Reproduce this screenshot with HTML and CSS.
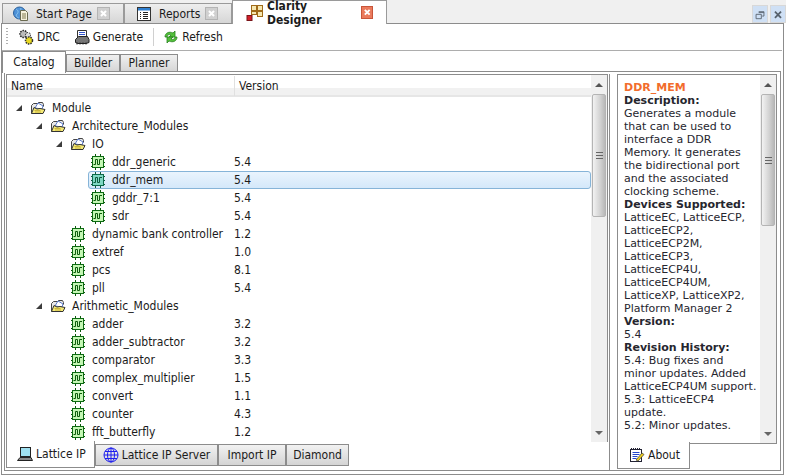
FILE: index.html
```html
<!DOCTYPE html>
<html lang="en">
<head>
    <meta charset="UTF-8">
    <title>Clarity Designer</title>
    <link rel="stylesheet" href="styles.css">
</head>
<body>
    <svg class="defs" width="0" height="0">
        <symbol id="chip" viewBox="0 0 16 16">
            <path d="M1 4.5h2M1 8.5h2M1 12.5h2M13 4.5h2M13 8.5h2M13 12.5h2M5.500 0v2M10.500 0v2M5.500 14v2M10.500 14v2" stroke="#0c5a0c" fill="none"/>
            <rect x="2.500" y="2.500" width="11" height="11" fill="#c4f7b4" stroke="#0c6a12"/>
            <path d="M3.500 10.500h2v-5h2v5h2v-5h2.500" stroke="#0c5a0c" fill="none"/>
        </symbol>
        <symbol id="chip-sel" viewBox="0 0 16 16">
            <path d="M1 4.500h2M1 8.500h2M1 12.500h2M13 4.500h2M13 8.500h2M13 12.500h2M5.500 0v2M10.500 0v2M5.500 14v2M10.500 14v2" stroke="#0c5a3c" fill="none"/>
            <rect x="2.500" y="2.500" width="11" height="11" fill="#7fd8c4" stroke="#0c6a4a"/>
            <path d="M3.500 10.500h2v-5h2v5h2v-5h2.500" stroke="#0c5a3c" fill="none"/>
        </symbol>
        <symbol id="folder" viewBox="0 0 16 16">
            <path d="M1.500 13.500v-8l2-2h4l1-1h4l1 2v2" fill="#e8e8e8" stroke="#444"/>
            <path d="M5 8l3-5 5 3-1 3z" fill="#fff" stroke="#3a5fc0" stroke-width=".8"/>
            <path d="M1.500 13.500l2.500-6 3 1.500 3-.5 5 1-2 4z" fill="#f5ea78" stroke="#333"/>
            <path d="M5 12h6M4.500 10.500h6" stroke="#c9b53a"/>
        </symbol>
        <symbol id="close" viewBox="0 0 13 13">
            <path d="M3.500 3.500l6 6M9.500 3.500l-6 6" stroke="#fff" stroke-width="2.400" fill="none"/>
        </symbol>
    </svg>

    <div class="topbar">
        <div class="doc-tab">
            <svg class="ico16" viewBox="0 0 16 16">
                <circle cx="6.500" cy="7" r="6" fill="#4f92d8" stroke="#2a5f9a"/>
                <path d="M3 3c2 1 3 3 1 5s1 4 2 4M8 2c-1 2 1 3 3 3" stroke="#8ec8f0" fill="none"/>
                <path d="M7.500 4.500h5l2 2v8h-7z" fill="#f6f1dc" stroke="#6a6a50"/>
                <path d="M9 8h4M9 10h4M9 12h4" stroke="#807a50"/>
            </svg>
            <span class="doc-label">Start Page</span>
            <span class="doc-x"><svg viewBox="0 0 13 13"><use href="#close"/></svg></span>
        </div>
        <div class="doc-tab doc-tab-reports">
            <svg class="ico16" viewBox="0 0 16 16">
                <rect x="1.500" y="1.500" width="13" height="13" fill="#fff" stroke="#333"/>
                <rect x="2" y="2" width="12" height="2.500" fill="#2f7fd0"/>
                <path d="M4 6.500h1M7 6.500h5M4 8.500h1M7 8.500h5M4 10.500h1M7 10.500h5M4 12.500h1M7 12.500h5" stroke="#222"/>
            </svg>
            <span class="doc-label">Reports</span>
            <span class="doc-x"><svg viewBox="0 0 13 13"><use href="#close"/></svg></span>
        </div>
        <div class="doc-tab doc-tab-active">
            <svg class="ico18" viewBox="0 0 18 18">
                <rect x="5.500" y="1.500" width="5" height="5" fill="#f6e7b0" stroke="#a06a18"/>
                <rect x="11.500" y="1.500" width="5" height="5" fill="#f6e7b0" stroke="#a06a18"/>
                <rect x="5.500" y="7.500" width="5" height="3" fill="#f6e7b0" stroke="#a06a18"/>
                <rect x="11.500" y="7.500" width="5" height="5" fill="#f6e7b0" stroke="#a06a18"/>
                <rect x="1" y="11.500" width="5" height="5" fill="#d21f2a" stroke="#7a1418"/>
            </svg>
            <span class="doc-label">Clarity Designer</span>
            <span class="doc-x doc-x-red"><svg viewBox="0 0 13 13"><use href="#close"/></svg></span>
        </div>
        <div class="win-btns">
            <span class="win-btn">
                <svg viewBox="0 0 16 18"><path d="M6.500 6.500h6v5h-2M3.500 9.500h6v5h-6zM6.500 7.500h6" fill="none" stroke="#56606c"/></svg>
            </span>
            <span class="win-btn">
                <svg viewBox="0 0 16 18"><path d="M4.500 6.500l7 7M11.500 6.500l-7 7" fill="none" stroke="#56606c" stroke-width="2"/></svg>
            </span>
        </div>
    </div>

    <div class="main">
        <div class="toolbar">
            <span class="grip"></span>
            <button class="tool tool-drc">
                <svg class="ico16" viewBox="0 0 16 16">
                    <circle cx="5.500" cy="5" r="3.500" fill="#bbb" stroke="#222" stroke-width="1.500" stroke-dasharray="1.500 1"/>
                    <circle cx="10" cy="6" r="2.500" fill="#ddd" stroke="#222" stroke-dasharray="1.500 1"/>
                    <circle cx="11" cy="11.500" r="3.500" fill="#e8d820" stroke="#333" stroke-width="1.500" stroke-dasharray="1.500 1"/>
                </svg>
                DRC
            </button>
            <button class="tool tool-gen">
                <svg class="ico16" viewBox="0 0 16 16">
                    <path d="M3.500 1.500h9v8h-9z" fill="#fff" stroke="#333"/>
                    <path d="M5 3.500h6M5 5.500h6M5 7.500h6" stroke="#3355cc"/>
                    <path d="M1.500 10.500l3-3h9l1.500 3v3l-3 1h-8l-2.500-1z" fill="#777" stroke="#222"/>
                    <path d="M3 15.500v-2M6 15.500v-2M9 15.500v-2M12 15.500v-2" stroke="#222"/>
                </svg>
                Generate
            </button>
            <span class="tool-sep"></span>
            <button class="tool tool-ref">
                <svg class="ico16" viewBox="0 0 16 16">
                    <path d="M2 8c0-4 4-6 8-4l2-2v6h-6l2-2c-2-1-4 0-4 2z" fill="#52c03a" stroke="#2a8020" stroke-width=".8"/>
                    <path d="M14 8c0 4-4 6-8 4l-2 2v-6h6l-2 2c2 1 4 0 4-2z" fill="#52c03a" stroke="#2a8020" stroke-width=".8"/>
                </svg>
                Refresh
            </button>
        </div>

        <div class="subtabs">
            <span class="subtab subtab-active">Catalog</span>
            <span class="subtab subtab-builder">Builder</span>
            <span class="subtab subtab-planner">Planner</span>
        </div>

        <div class="panel">
            <div class="left-col">
                <div class="pane tree-pane">
                    <div class="tree">
                        <div class="tree-head">
                            <span class="col-name">Name</span>
                            <span class="col-version">Version</span>
                        </div>
                        <div class="row d0"><i class="arrow"></i><svg class="ico16"><use href="#folder"/></svg><span class="name">Module</span></div>
                        <div class="row d1"><i class="arrow"></i><svg class="ico16"><use href="#folder"/></svg><span class="name">Architecture_Modules</span></div>
                        <div class="row d2"><i class="arrow"></i><svg class="ico16"><use href="#folder"/></svg><span class="name">IO</span></div>
                        <div class="row d3"><svg class="ico16"><use href="#chip"/></svg><span class="name">ddr_generic</span><span class="ver">5.4</span></div>
                        <div class="row d3 selected"><svg class="ico16"><use href="#chip-sel"/></svg><span class="name">ddr_mem</span><span class="ver">5.4</span></div>
                        <div class="row d3"><svg class="ico16"><use href="#chip"/></svg><span class="name">gddr_7:1</span><span class="ver">5.4</span></div>
                        <div class="row d3"><svg class="ico16"><use href="#chip"/></svg><span class="name">sdr</span><span class="ver">5.4</span></div>
                        <div class="row d2 leaf"><svg class="ico16"><use href="#chip"/></svg><span class="name">dynamic bank controller</span><span class="ver">1.2</span></div>
                        <div class="row d2 leaf"><svg class="ico16"><use href="#chip"/></svg><span class="name">extref</span><span class="ver">1.0</span></div>
                        <div class="row d2 leaf"><svg class="ico16"><use href="#chip"/></svg><span class="name">pcs</span><span class="ver">8.1</span></div>
                        <div class="row d2 leaf"><svg class="ico16"><use href="#chip"/></svg><span class="name">pll</span><span class="ver">5.4</span></div>
                        <div class="row d1"><i class="arrow"></i><svg class="ico16"><use href="#folder"/></svg><span class="name">Arithmetic_Modules</span></div>
                        <div class="row d2 leaf"><svg class="ico16"><use href="#chip"/></svg><span class="name">adder</span><span class="ver">3.2</span></div>
                        <div class="row d2 leaf"><svg class="ico16"><use href="#chip"/></svg><span class="name">adder_subtractor</span><span class="ver">3.2</span></div>
                        <div class="row d2 leaf"><svg class="ico16"><use href="#chip"/></svg><span class="name">comparator</span><span class="ver">3.3</span></div>
                        <div class="row d2 leaf"><svg class="ico16"><use href="#chip"/></svg><span class="name">complex_multiplier</span><span class="ver">1.5</span></div>
                        <div class="row d2 leaf"><svg class="ico16"><use href="#chip"/></svg><span class="name">convert</span><span class="ver">1.1</span></div>
                        <div class="row d2 leaf"><svg class="ico16"><use href="#chip"/></svg><span class="name">counter</span><span class="ver">4.3</span></div>
                        <div class="row d2 leaf"><svg class="ico16"><use href="#chip"/></svg><span class="name">fft_butterfly</span><span class="ver">1.2</span></div>
                    </div>
                    <div class="scrollbar">
                        <i class="sb-up"></i>
                        <div class="sb-thumb sb-thumb-tree"><span class="sb-grip"></span></div>
                        <i class="sb-down"></i>
                    </div>
                </div>
                <div class="bottom-tabs">
                    <span class="btab btab-active btab-ip">
                        <svg class="ico16" viewBox="0 0 16 16">
                            <rect x="3.500" y="1.500" width="10" height="9" fill="#9fe0f0" stroke="#222"/>
                            <path d="M3 11.500h11l1.500 3h-15z" fill="#888" stroke="#222"/>
                        </svg>
                        Lattice IP
                    </span>
                    <span class="btab btab-server">
                        <svg class="ico16" viewBox="0 0 16 16">
                            <circle cx="8" cy="8" r="7" fill="none" stroke="#1c1cf0"/>
                            <ellipse cx="8" cy="8" rx="3.500" ry="7" fill="none" stroke="#1c1cf0"/>
                            <path d="M8 1v14M1 8h14M2 4.500h12M2 11.500h12" stroke="#1c1cf0"/>
                        </svg>
                        Lattice IP Server
                    </span>
                    <span class="btab btab-import">Import IP</span>
                    <span class="btab btab-diamond">Diamond</span>
                </div>
            </div>

            <div class="right-col">
                <div class="pane about-pane">
                    <div class="about-text">
                        <div class="about-title">DDR_MEM</div>
                        <b>Description:</b><br>
                        Generates a module that can be used to interface a DDR Memory. It generates the bidirectional port and the associated clocking scheme.<br>
                        <b>Devices Supported:</b><br>
                        LatticeEC, LatticeECP, LatticeECP2, LatticeECP2M, LatticeECP3, LatticeECP4U, LatticeECP4UM, LatticeXP, LatticeXP2, Platform Manager 2<br>
                        <b>Version:</b><br>
                        5.4<br>
                        <b>Revision History:</b><br>
                        5.4: Bug fixes and minor updates. Added LatticeECP4UM support.<br>
                        5.3: LatticeECP4 update.<br>
                        5.2: Minor updates.
                    </div>
                    <div class="scrollbar">
                        <i class="sb-up"></i>
                        <div class="sb-thumb sb-thumb-about"><span class="sb-grip"></span></div>
                        <i class="sb-down"></i>
                    </div>
                </div>
                <div class="bottom-tabs">
                    <span class="btab btab-active btab-about">
                        <svg class="ico16" viewBox="0 0 16 16">
                            <rect x="1.500" y="2.500" width="11" height="12" fill="#fff" stroke="#223"/>
                            <path d="M2 1.500h10" stroke="#223" stroke-dasharray="1 1"/>
                            <path d="M3.500 5.500h7M3.500 7.500h7M3.500 9.500h5M3.500 11.500h4" stroke="#2244cc"/>
                            <path d="M7 13l6-7 2 1.500-6 6.500z" fill="#f0d020" stroke="#333" stroke-width=".7"/>
                        </svg>
                        About
                    </span>
                </div>
            </div>
        </div>
    </div>
</body>
</html>
```

FILE: styles.css
```css
html, body {
    margin: 0;
    padding: 0;
}
body {
    width: 786px;
    height: 475px;
    overflow: hidden;
    background: #fff;
    color: #1b1b1b;
    font-family: "DejaVu Sans", Verdana, sans-serif;
    font-size: 12px;
    font-stretch: condensed;
}
.defs {
    position: absolute;
}
svg {
    display: block;
    flex: none;
}
.ico16 {
    width: 16px;
    height: 16px;
}
.ico18 {
    width: 18px;
    height: 18px;
}

/* document tabs */
.topbar {
    height: 23px;
    display: flex;
    background: #f0f0f0;
    padding-left: 2px;
}
.doc-tab {
    width: 122px;
    height: 20px;
    margin-top: 3px;
    box-sizing: border-box;
    display: flex;
    align-items: center;
    padding-left: 10px;
    border: 1px solid #9a9a9a;
    border-bottom: none;
    background: linear-gradient(#eeeeee, #d6d6d6);
}
.doc-tab-reports {
    width: 108px;
    padding-left: 11px;
}
.doc-tab-active {
    width: 155px;
    height: 24px;
    margin-top: 0;
    margin-bottom: -1px;
    padding-left: 13px;
    background: #fff;
    font-weight: bold;
    position: relative;
    z-index: 1;
}
.doc-label {
    margin-left: 7px;
}
.doc-tab-active .doc-label {
    margin-left: 3px;
}
.doc-x {
    width: 13px;
    height: 13px;
    margin-left: auto;
    margin-right: 13px;
    box-sizing: border-box;
    background: #d0d0d0;
    border: 1px solid #b4b4b4;
}
.doc-x-red {
    background: #ea7a5c;
    border-color: #c8553a;
}
.win-btns {
    margin-left: auto;
    display: flex;
    gap: 2px;
    padding-top: 5px;
}
.win-btn {
    width: 16px;
    height: 18px;
    background: #cfe0f5;
    border: 1px solid #d8d8d8;
    box-sizing: border-box;
}

/* main window */
.main {
    width: 783px;
    height: 452px;
    margin-left: 1px;
    box-sizing: border-box;
    border: 1px solid #8c8c8c;
    display: flex;
    flex-direction: column;
}
.toolbar {
    height: 26px;
    flex: none;
    margin-right: 1px;
    display: flex;
    align-items: center;
    border-bottom: 1px solid #adadad;
    box-sizing: content-box;
}
.grip {
    width: 2px;
    height: 18px;
    margin-left: 4px;
    background: repeating-linear-gradient(#b0b0b0 0 1px, #fff 1px 3px);
}
.tool {
    display: flex;
    align-items: center;
    gap: 3px;
    padding: 0;
    border: none;
    background: none;
    color: #1b1b1b;
    font: inherit;
    font-stretch: inherit;
}
.tool-drc {
    margin-left: 10px;
}
.tool-gen {
    margin-left: 14px;
}
.tool-sep {
    width: 1px;
    height: 18px;
    margin-left: 10px;
    background: #d0d0d0;
}
.tool-ref {
    margin-left: 9px;
}

/* catalog / builder / planner */
.subtabs {
    height: 20px;
    flex: none;
    display: flex;
    align-items: flex-end;
}
.subtab {
    height: 17px;
    box-sizing: border-box;
    border: 1px solid #8c8c8c;
    border-bottom: none;
    background: linear-gradient(#f0f0f0, #d6d6d6);
    line-height: 16px;
    text-align: center;
}
.subtab-active {
    width: 64px;
    height: 22px;
    margin-bottom: -2px;
    background: #fff;
    line-height: 20px;
    position: relative;
    z-index: 1;
}
.subtab-builder {
    width: 54px;
}
.subtab-planner {
    width: 58px;
}

.panel {
    flex: 1;
    margin: 0 2px 3px 2px;
    border: 1px solid #8c8c8c;
    display: flex;
    padding-top: 2px;
    min-height: 0;
}
.left-col {
    width: 605px;
    box-sizing: border-box;
    border-right: 1px solid #8c8c8c;
    padding: 0 1px;
    flex: none;
}
.right-col {
    width: 160px;
    margin-left: 7px;
    flex: none;
}
.pane {
    display: flex;
    box-sizing: border-box;
    border: 1px solid #8c8c8c;
    border-bottom: none;
    height: 368px;
}
.about-pane {
    border-bottom: 1px solid #8c8c8c;
    height: 370px;
}

/* tree */
.tree {
    flex: 1;
    overflow: hidden;
    min-width: 0;
}
.tree-head {
    height: 22px;
    display: flex;
    align-items: center;
    box-sizing: border-box;
    border-bottom: 2px solid #e6e6e6;
    background: linear-gradient(#fff 0 13px, #f1f1f1 13px);
    margin-bottom: 2px;
    padding-top: 1px;
}
.col-name {
    width: 223px;
    padding-left: 4px;
    border-right: 1px solid #e0e0e0;
    height: 20px;
    line-height: 20px;
}
.col-version {
    padding-left: 4px;
}
.row {
    height: 18px;
    display: flex;
    align-items: center;
    position: relative;
    box-sizing: border-box;
}
.d0 {
    padding-left: 9px;
}
.d1 {
    padding-left: 29px;
}
.d2 {
    padding-left: 49px;
}
.d2.leaf {
    padding-left: 63px;
}
.d3 {
    padding-left: 83px;
}
.arrow {
    width: 0;
    height: 0;
    margin-right: 8px;
    border-style: solid;
    border-width: 0 0 6px 6px;
    border-color: transparent transparent #3c3c3c transparent;
}
.name {
    margin-left: 6px;
}
.ver {
    position: absolute;
    left: 227px;
}
.selected {
    margin-left: 81px;
    padding-left: 1px;
    border: 1px solid #86b4d8;
    border-radius: 3px;
    background: linear-gradient(#eaf4fd, #d4e8fa);
}
.selected .ver {
    left: 145px;
}

/* scrollbars */
.scrollbar {
    width: 16px;
    flex: none;
    position: relative;
    background: #f0f0f0;
}
.sb-up, .sb-down {
    position: absolute;
    left: 4px;
    width: 0;
    height: 0;
    border-left: 4px solid transparent;
    border-right: 4px solid transparent;
}
.sb-up {
    top: 8px;
    border-bottom: 4px solid #555;
}
.sb-down {
    bottom: 7px;
    border-top: 4px solid #666;
}
.sb-thumb {
    position: absolute;
    top: 19px;
    left: 1px;
    width: 14px;
    box-sizing: border-box;
    border: 1px solid #b4b4b4;
    border-radius: 2px;
    background: linear-gradient(90deg, #f2f2f2, #d2d2d2 60%, #b8b8b8);
    display: flex;
    align-items: center;
    justify-content: center;
}
.sb-thumb-tree {
    height: 123px;
}
.sb-thumb-about {
    height: 132px;
}
.sb-grip {
    width: 7px;
    height: 7px;
    background: repeating-linear-gradient(#666 0 1px, transparent 1px 3px);
}

/* about text */
.about-text {
    flex: 1;
    min-width: 0;
    padding: 6px 2px 0 6px;
    overflow: hidden;
    font-size: 11px;
    font-stretch: normal;
    line-height: 13px;
    height: 366px;
    color: #26262e;
}
.about-title {
    color: #f26c2c;
    font-weight: bold;
}

/* bottom tabs */
.bottom-tabs {
    display: flex;
    height: 25px;
    align-items: flex-start;
}
.btab {
    height: 22px;
    margin-top: 2px;
    box-sizing: border-box;
    border: 1px solid #8c8c8c;
    background: linear-gradient(#f2f2f2, #d4d4d4);
    display: flex;
    align-items: center;
    gap: 3px;
    justify-content: center;
}
.btab-active {
    height: 27px;
    margin-top: -1px;
    background: #fff;
    border-top: none;
    position: relative;
}
.btab-ip {
    width: 89px;
    justify-content: flex-start;
    padding-left: 10px;
}
.btab-server {
    width: 123px;
}
.btab-import {
    width: 68px;
}
.btab-diamond {
    width: 63px;
}
.btab-about {
    width: 73px;
    margin-top: -2px;
}
.right-col .btab-about {
    justify-content: flex-start;
    padding-left: 11px;
}
```
